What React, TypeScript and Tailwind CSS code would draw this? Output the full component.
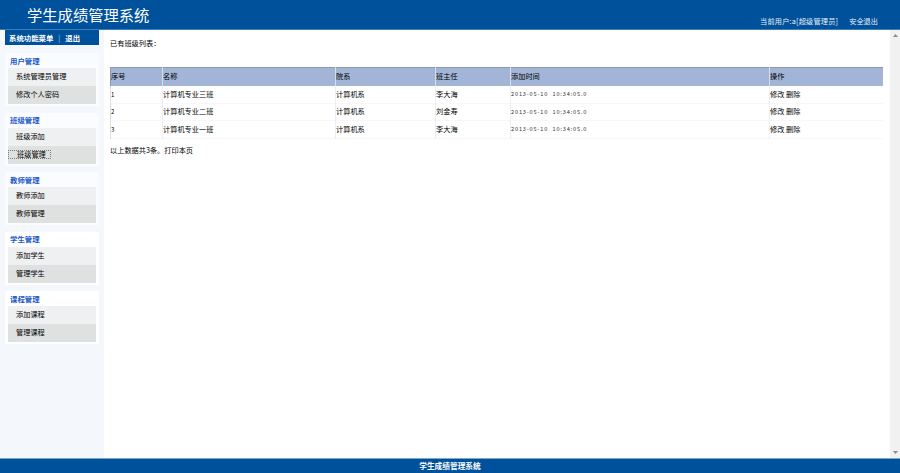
const font = "font-['SimSun','Noto_Sans_CJK_SC','Liberation_Sans',sans-serif]"

const menus = [
  { title: '用户管理', items: ['系统管理员管理', '修改个人密码'], bg: 'bg-[#fbfcff]' },
  { title: '班级管理', items: ['班级添加', '班级管理'], bg: 'bg-[#fbfcff]', focus: 1 },
  { title: '教师管理', items: ['教师添加', '教师管理'], bg: 'bg-[#fafcff]' },
  { title: '学生管理', items: ['添加学生', '管理学生'], bg: 'bg-white' },
  { title: '课程管理', items: ['添加课程', '管理课程'], bg: 'bg-white' },
]

const rows = [
  ['1', '计算机专业三班', '计算机系', '李大海', '2013-05-10  10:34:05.0'],
  ['2', '计算机专业二班', '计算机系', '刘金寿', '2013-05-10  10:34:05.0'],
  ['3', '计算机专业一班', '计算机系', '李大海', '2013-05-10  10:34:05.0'],
]

const headers = ['序号', '名称', '院系', '班主任', '添加时间', '操作']

function Sidebar() {
  return (
    <div className="w-[104px] shrink-0 bg-[#f4f8fc] px-[5px]">
      <div className="flex h-[15px] items-center gap-[5px] bg-[#00519b] pl-1 text-[7.4px] font-bold text-white">
        <span>系统功能菜单</span>
        <span className="font-normal text-[#a9c3de]">|</span>
        <span>退出</span>
      </div>
      <div className="mt-2 flex flex-col gap-[6.5px]">
        {menus.map(menu => (
          <div key={menu.title} className={`h-[53px] ${menu.bg}`}>
            <div className="flex h-[15px] items-center pl-[5px] text-[7.4px] font-bold text-[#2259c7]">{menu.title}</div>
            <div className="px-[3px]">
              {menu.items.map((item, i) => (
                <div
                  key={item}
                  className={`flex h-[18px] items-center pb-px text-[7.2px] text-black ${i === 0 ? 'bg-[#eff0f1]' : 'bg-[#dfe1e0]'} ${menu.focus === i ? '' : 'pl-2'}`}
                >
                  {menu.focus === i ? (
                    <span className="border border-dotted border-[#777] pl-2 pr-1 leading-[7px]">{item}</span>
                  ) : item}
                </div>
              ))}
            </div>
          </div>
        ))}
      </div>
    </div>
  )
}

function ClassTable() {
  return (
    <table className="w-[772px] table-fixed border-collapse text-left text-[7.2px] text-black">
      <colgroup>
        <col className="w-[52px]" />
        <col className="w-[173px]" />
        <col className="w-[100px]" />
        <col className="w-[75px]" />
        <col className="w-[259px]" />
        <col className="w-[113px]" />
      </colgroup>
      <thead>
        <tr className="h-[18px] border-t border-t-[#8f98a8] bg-[#a3b5d6]">
          {headers.map((h, i) => (
            <th key={h} className={`border-l p-0 font-normal ${i === 0 ? 'border-l-[#8f98a8]' : 'border-l-[#d5deee]'}`}>{h}</th>
          ))}
        </tr>
      </thead>
      <tbody>
        {rows.map(row => (
          <tr key={row[0]} className="h-[17.5px] border-b border-b-[#f7f7f8]">
            {row.map((cell, i) => (
              <td
                key={i}
                className={`whitespace-pre border-l p-0 ${i === 0 ? 'border-l-[#dcdee2] text-[6px]' : 'border-l-[#eaeef6]'} ${i === 4 ? 'text-[5.6px] tracking-[0.85px] text-[#333]' : ''}`}
              >
                {cell}
              </td>
            ))}
            <td className="border-l border-l-[#eaeef6] p-0">修改 删除</td>
          </tr>
        ))}
      </tbody>
    </table>
  )
}

export default function App() {
  return (
    <div className={`flex h-[473px] w-[900px] flex-col overflow-hidden bg-white ${font}`}>
      <div className="flex h-[30px] shrink-0 items-center justify-between border-b border-b-[#3f7fb8] bg-[#00519b] text-white">
        <div className="pl-[27px] text-[15.3px] leading-none">学生成绩管理系统</div>
        <div className="flex gap-[11px] pr-[22px] pt-[14px] text-[7.2px] text-[#e4edf6]">
          <span className="tracking-[0.2px]">当前用户:a[超级管理员]</span>
          <span>安全退出</span>
        </div>
      </div>

      <div className="flex min-h-0 flex-1">
        <Sidebar />
        <div className="flex-1 pl-[6px] pt-[9px]">
          <div className="h-7 text-[7.2px] leading-[8px] text-black">已有班级列表：</div>
          <ClassTable />
          <div className="mt-[7px] text-[7.2px] leading-[8px] text-black">以上数据共3条。打印本页</div>
        </div>
        <div className="flex w-[10px] shrink-0 flex-col items-center justify-between bg-[#f1f1f1] py-[4px] text-[#8a8a8a]">
          <svg width="5" height="3" viewBox="0 0 5 3"><path d="M2.5 0 5 3H0z" fill="currentColor" /></svg>
          <svg width="5" height="3" viewBox="0 0 5 3"><path d="M0 0h5L2.5 3z" fill="currentColor" /></svg>
        </div>
      </div>

      <div className="flex h-[15px] shrink-0 items-center justify-center border-t border-t-[#7fa6cc] bg-[#00519b] text-[7.7px] font-bold text-white">
        学生成绩管理系统
      </div>
    </div>
  )
}
